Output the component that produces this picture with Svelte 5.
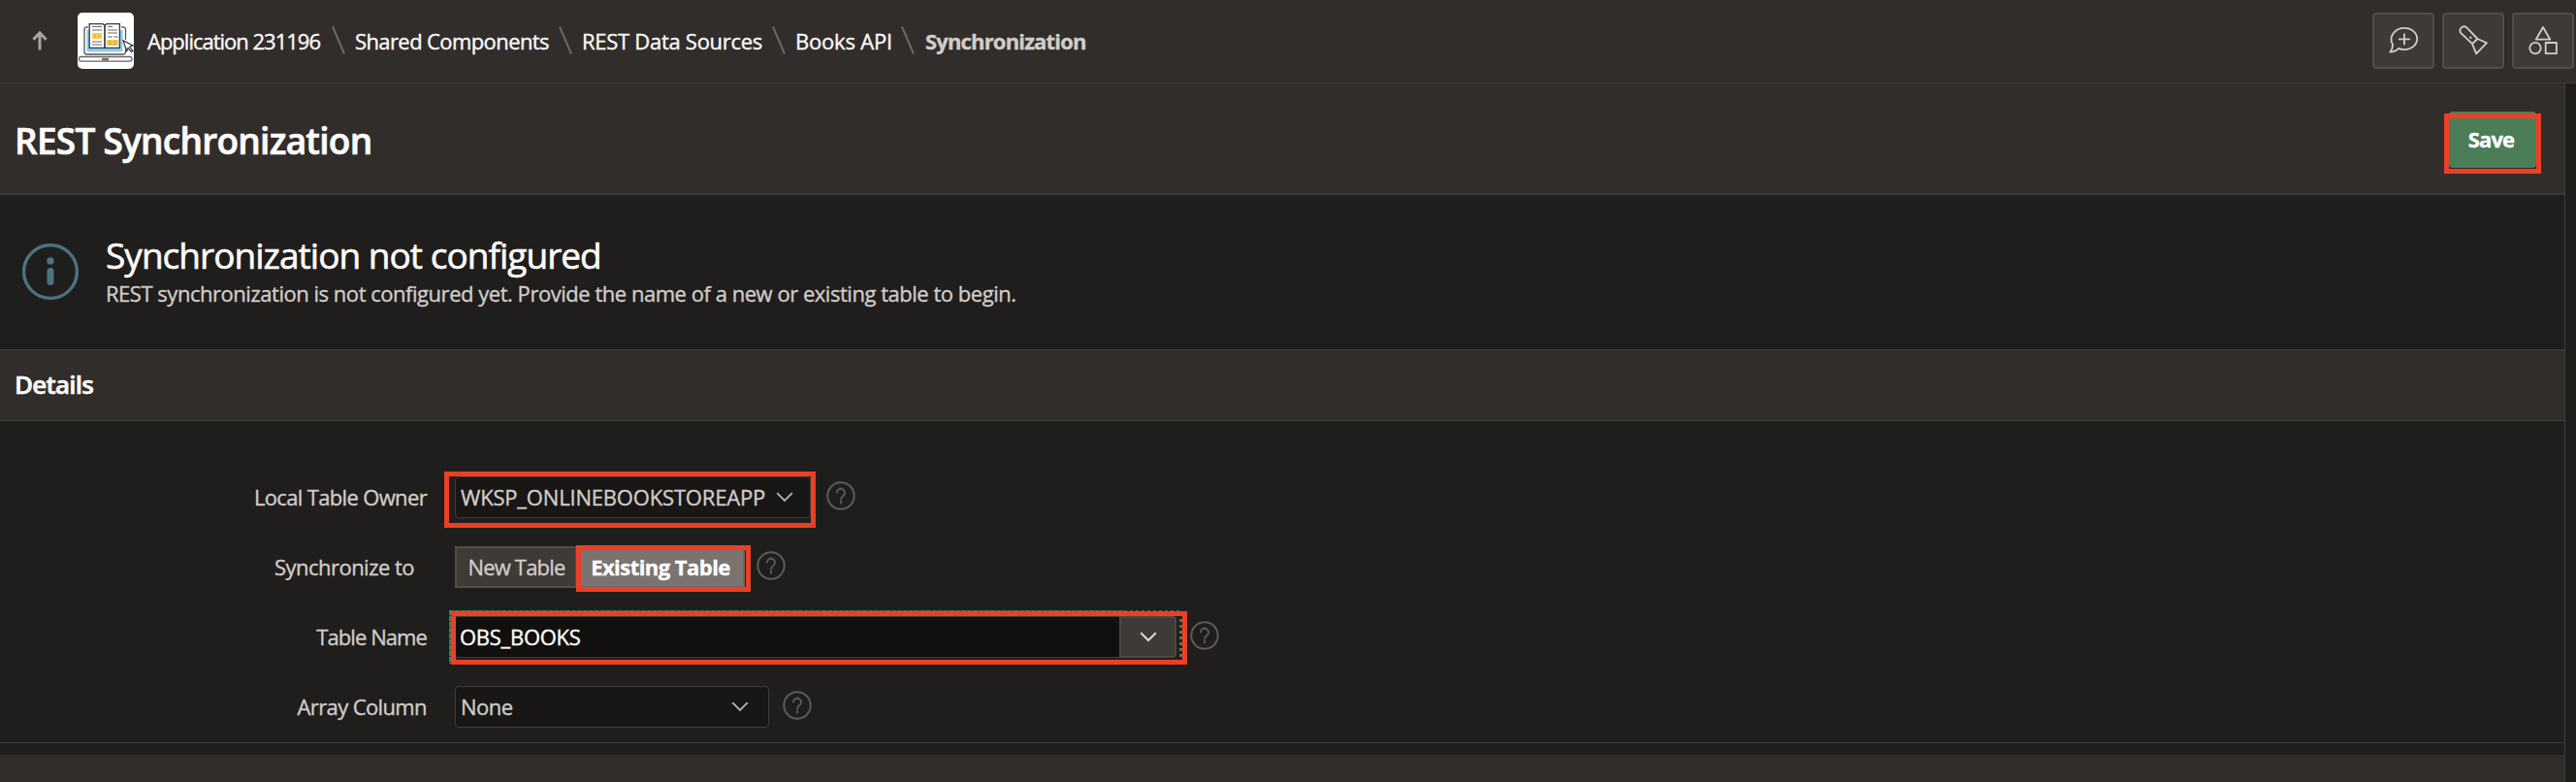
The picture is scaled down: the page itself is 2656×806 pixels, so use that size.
<script>
  const crumbs = [
    { label: 'Application 231196', width: 180, spacing: -1.0 },
    { label: 'Shared Components', width: 200, spacing: -0.6 },
    { label: 'REST Data Sources', width: 186, spacing: -0.28 },
    { label: 'Books API', width: 99, spacing: -0.2 }
  ];
</script>

{#snippet help()}
  <svg class="help" width="30" height="30" viewBox="0 0 30 30">
    <circle cx="15" cy="15" r="13.7" />
    <path d="M11 11.6a4 4 0 1 1 6.6 3.1c-1.6 1.2-2.5 1.7-2.5 3.7" />
    <path d="M15 20.8v1.6" />
  </svg>
{/snippet}

{#snippet chevron(cls)}
  <svg class="chevron {cls}" width="18" height="11" viewBox="0 0 18 11"><path d="M1.2 1.2 9 9l7.800-7.800" /></svg>
{/snippet}

<div class="app">
  <header>
    <svg class="up" width="18" height="22" viewBox="0 0 18 22">
      <path d="M9 20.500V3.500M2.400 9.800 9 3l6.600 6.800" />
    </svg>
    <svg class="logo" width="58" height="58" viewBox="0 0 58 58">
      <rect width="58" height="58" rx="5" fill="#fff" />
      <path d="M11 14.800H9.500a2.500 2.500 0 0 0-2.500 2.500v23.200a2.500 2.500 0 0 0 2.500 2.500h37.500a2.500 2.500 0 0 0 2.500-2.500V35M45 14.800h2a2.500 2.500 0 0 1 2.500 2.500V28" fill="none" stroke="#55555a" stroke-width="1.300" />
      <rect x="9.500" y="18" width="37" height="22.300" fill="#8accf0" />
      <path d="M12.200 11.600H26l2 1.400 2-1.400h13.400v24.800H12.200z" fill="#fff" stroke="#38383d" stroke-width="1.300" />
      <path d="M28 13v23" stroke="#45454a" stroke-width="1.800" />
      <path d="M15 14.500h10M15 18h10M15 30h10M15 33h10M31 14.500h5M31 18h10M31 21h10M31 25h5M37.500 25h4" stroke="#6b6b6e" stroke-width="1.100" />
      <rect x="15" y="21" width="10" height="6" fill="#f3cf55" />
      <rect x="30" y="28" width="12" height="6" fill="#f3cf55" />
      <path d="M17 24h2M21 24h2M32 30h3M37 30h3M32 32.500h3M37 32.500h3" stroke="#c39b31" stroke-width="1" />
      <rect x="1.500" y="45.500" width="54.500" height="4.600" rx="2" fill="#fff" stroke="#66666a" stroke-width="1.300" />
      <rect x="25" y="46.800" width="7" height="2.800" fill="#707074" />
      <path d="M47 28.800 57 34l-3.400 1.300 3.400 4-1.600 1.200-3.400-3.900-1.300 3z" fill="#fff" stroke="#303034" stroke-width="1.200" />
    </svg>
    <nav>
      {#each crumbs as c}
        <a style="width:{c.width}px;letter-spacing:{c.spacing}px">{c.label}</a>
        <svg class="sep" width="14" height="29" viewBox="0 0 14 29"><path d="M1 .5 13 28.500" /></svg>
      {/each}
      <b>Synchronization</b>
    </nav>
    <div class="tools">
      <button aria-label="Feedback">
        <svg viewBox="0 0 64 58"><path d="M20.900 32.700C16.600 25 23 15.900 33 15.900c7.300 0 13.200 5 13.200 11.100S40.300 38.100 33 38.100c-2.100 0-4.200-.4-6-1.200-2.400 2.600-5.200 3.600-8.700 3.700 2-2.300 2.900-4.700 2.600-7.900z" /><path d="M33 22.200v10.400M27.800 27.400h10.400" /></svg>
      </button>
      <button aria-label="Search">
        <svg viewBox="0 0 64 58"><path d="M19.600 21.300c-3.400-3.800 1.800-9.200 5.700-5.900L36.500 27 46 31.200 35.200 42.300 31 32.200zM31 32.200l5.500-5.200" /><path d="M29 25.300l.8.800" /></svg>
      </button>
      <button aria-label="Components">
        <svg viewBox="0 0 64 58"><path d="M32 15l7.300 12.700H24.700z" /><circle cx="24" cy="36.600" r="5.700" /><rect x="34.700" y="31" width="11.200" height="11.200" /></svg>
      </button>
    </div>
  </header>

  <main>
    <section class="title">
      <h1>REST Synchronization</h1>
      <div class="savewrap">
        <button class="save">Save</button>
        <i class="mark save-mark"></i>
      </div>
    </section>

    <section class="info">
      <svg width="60" height="60" viewBox="0 0 60 60">
        <circle cx="30" cy="30" r="27.400" fill="none" stroke="#4d7382" stroke-width="3.400" />
        <circle cx="30" cy="19" r="3.700" fill="#4d7382" />
        <rect x="26.500" y="26" width="7" height="18" rx="3.500" fill="#4d7382" />
      </svg>
      <div>
        <h2>Synchronization not configured</h2>
        <p>REST synchronization is not configured yet. Provide the name of a new or existing table to begin.</p>
      </div>
    </section>

    <h3>Details</h3>

    <section class="form">
      <div class="row">
        <label class="l1">Local Table Owner</label>
        <div class="field">
          <div class="select owner"><span>WKSP_ONLINEBOOKSTOREAPP</span>{@render chevron('')}</div>
          <i class="mark owner-mark"></i>
        </div>
        {@render help()}
      </div>
      <div class="row">
        <label class="l2">Synchronize to</label>
        <div class="field pills">
          <div class="pill">New Table</div>
          <div class="pill on">Existing Table<i class="mark pill-mark"></i></div>
        </div>
        {@render help()}
      </div>
      <div class="row">
        <label class="l3">Table Name</label>
        <div class="field lov">
          <div class="text">OBS_BOOKS</div>
          <div class="drop">{@render chevron('bright')}</div>
          <i class="focus"></i>
          <i class="mark lov-mark"></i>
        </div>
        {@render help()}
      </div>
      <div class="row">
        <label class="l4">Array Column</label>
        <div class="field">
          <div class="select array"><span>None</span>{@render chevron('')}</div>
        </div>
        {@render help()}
      </div>
    </section>
    <div class="next"></div>
  </main>
</div>

<style>
  :global(body) { background: #201e1c; overflow: hidden; }
  .app {
    width: 2656px; height: 806px; overflow: hidden;
    display: flex; flex-direction: column;
    font: 400 22px/30px "Open Sans", "Noto Sans", sans-serif;
    color: #d0cdcb; background: #201e1c;
    white-space: nowrap; -webkit-text-stroke: .35px currentColor;
  }
  .app :global(*) { box-sizing: border-box; }
  header {
    display: flex; align-items: center; flex: none;
    height: 86px; padding: 0 2px 1px 32px;
    background: #312d2a; border-bottom: 1px solid #403b37;
  }
  header > svg { flex: none; }
  .up { margin-right: 30px; }
  .up path { fill: none; stroke: #a7a4a2; stroke-width: 3; }
  nav { display: flex; align-items: center; gap: 10px; margin-left: 14px; }
  nav a { color: #fcfbfa; font-weight: 500; }
  nav b { color: #d0cdcb; font-weight: 700; letter-spacing: -.830px; padding-left: 1px; }
  .sep { position: relative; top: -1px; }
  .sep path { stroke: #6d6865; stroke-width: 2; }
  .tools { display: flex; gap: 8px; margin-left: auto; }
  .tools button {
    width: 64px; height: 58px; padding: 0;
    background: #3e3a35; border: 2px solid #524d48; border-radius: 4px;
  }
  .tools svg { display: block; width: 64px; height: 58px; margin: -2px; fill: none; stroke: #d2cfcb; stroke-width: 1.800; stroke-linejoin: round; stroke-linecap: round; }

  main { width: 2645px; flex: 1; display: flex; flex-direction: column; border-right: 1px solid #403c38; }
  .title {
    flex: none; height: 115px; padding: 2px 29px 0 15px;
    display: flex; align-items: center; justify-content: space-between;
    background: #312d2a; border-bottom: 2px solid #3d3834;
  }
  h1 { margin: 2px 0 0; font-size: 37px; line-height: 50px; font-weight: 600; letter-spacing: -.740px; color: #fcfbfa; -webkit-text-stroke-width: .7px; }
  .savewrap { position: relative; }
  .save {
    display: block; width: 90px; height: 58px; padding: 0 3px 0 0;
    border: 0; border-radius: 4px; background: #4b7d57; color: #fff;
    font: 700 22px/54px "Open Sans", sans-serif; letter-spacing: -.900px;
    padding-bottom: 2px;
  }
  .mark { position: absolute; border: 5px solid #eb4026; pointer-events: none; }
  .save-mark { left: -5px; top: 2px; width: 100px; height: 62px; }

  .info { flex: none; height: 159px; display: flex; padding: 34px 0 0 21px; }
  .info > svg { margin: 15px -1px 0 1px; flex: none; }
  .info div { margin-left: 28px; }
  h2 { margin: 3px 0 0; font-size: 37px; line-height: 50px; font-weight: 500; letter-spacing: -.970px; color: #fcfbfa; -webkit-text-stroke-width: .6px; }
  .info p { margin: -1px 0 0; letter-spacing: -.470px; }

  h3 {
    flex: none; margin: 0; height: 74px; padding: 0 0 0 15px;
    font-size: 26px; line-height: 71px; font-weight: 600; letter-spacing: -.780px; color: #fcfbfa; -webkit-text-stroke-width: .6px;
    background: #312d2a; border: 1px solid #3f3b37; border-width: 1px 0;
  }

  .form { flex: none; height: 332px; padding-top: 57px; display: flex; flex-direction: column; gap: 29px; border-bottom: 1px solid #403c39; }
  .row { display: flex; height: 43px; align-items: center; }
  .row label { width: 440px; margin-right: 29px; text-align: right; padding-bottom: 2px; }
  .l1 { letter-spacing: -.655px; }
  .row .l2 { letter-spacing: -.520px; padding-right: 13px; }
  .l3 { letter-spacing: -.920px; }
  .l4 { letter-spacing: -.610px; }
  .field { position: relative; display: flex; height: 43px; }
  .select {
    display: flex; align-items: center; justify-content: space-between;
    background: #191715; border: 1px solid #3f3b38; border-radius: 4px;
    padding: 0 20px 1px 5px;
  }
  .owner { width: 367px; padding-right: 17px; letter-spacing: -.180px; }
  .array { width: 324px; letter-spacing: -.530px; }
  .chevron { fill: none; stroke: #b5b2af; stroke-width: 1.900; }
  .chevron.bright { stroke: #d8d5d2; stroke-width: 2.200; }
  .owner-mark { left: -11px; top: -5px; width: 383px; height: 58px; }
  .help { fill: none; stroke: #5d5a57; stroke-width: 2; margin: 0 0 3px 16px; stroke-linecap: round; }
  .pill {
    position: relative; height: 43px; width: 126px; line-height: 39px; text-align: center;
    background: #3e3a35; border: 2px solid #554d46; letter-spacing: -.800px; padding-left: 1px;
  }
  .pill.on { width: 173px; background: #7a736f; border-color: #6d6763; border-left: 0; color: #fff; font-weight: 700; letter-spacing: -.540px; }
  .pill-mark { left: -1px; top: -3px; width: 180px; height: 48px; }
  .pills + :global(.help) { margin-left: 12px; }
  .text {
    width: 685px; padding-left: 4px; line-height: 41px; color: #fff;
    background: #11100e; border: 1px solid #3f3b38; border-right: 0; border-radius: 4px 0 0 4px; letter-spacing: -.270px;
  }
  .drop {
    width: 59px; display: flex; align-items: center; justify-content: center;
    background: #3e3a35; border: 2px solid #4c4742; border-radius: 0 4px 4px 0;
  }
  .focus {
    position: absolute; left: -6px; top: -6px; width: 756px; height: 55px;
    background:
      repeating-linear-gradient(180deg, #4b7a5b 0 5px, #2b3a2f 5px 6px) 0 0 / 3px 100% no-repeat,
      repeating-linear-gradient(180deg, transparent 0 3px, #4b7a5b 3px 6px) 100% 0 / 3px 100% no-repeat,
      repeating-linear-gradient(90deg, #5c6b5c 0 5px, #2b3a2f 5px 6px) 0 0 / 699px 1px no-repeat,
      repeating-linear-gradient(90deg, transparent 0 3px, #5c6b5c 3px 6px) 100% 0 / 57px 1px no-repeat;
  }
  .lov-mark { left: -4px; top: -5px; width: 759px; height: 55px; }
  .lov + :global(.help) { margin-left: 14px; }
  .array { margin-right: -2px; }
  .next { flex: 1; margin-top: 12px; background: #312d2a; }
</style>
